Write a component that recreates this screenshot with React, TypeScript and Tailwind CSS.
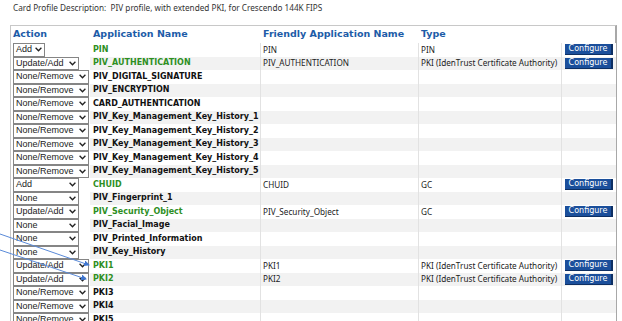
import React from 'react'

interface AppRow {
  action: string
  boxWidth: number
  name: string
  friendly: string
  type: string
  active: boolean
}

const rows: AppRow[] = [
  { action: 'Add', boxWidth: 32, name: 'PIN', friendly: 'PIN', type: 'PIN', active: true },
  { action: 'Update/Add', boxWidth: 66, name: 'PIV_AUTHENTICATION', friendly: 'PIV_AUTHENTICATION', type: 'PKI (IdenTrust Certificate Authority)', active: true },
  { action: 'None/Remove', boxWidth: 76, name: 'PIV_DIGITAL_SIGNATURE', friendly: '', type: '', active: false },
  { action: 'None/Remove', boxWidth: 76, name: 'PIV_ENCRYPTION', friendly: '', type: '', active: false },
  { action: 'None/Remove', boxWidth: 76, name: 'CARD_AUTHENTICATION', friendly: '', type: '', active: false },
  { action: 'None/Remove', boxWidth: 76, name: 'PIV_Key_Management_Key_History_1', friendly: '', type: '', active: false },
  { action: 'None/Remove', boxWidth: 76, name: 'PIV_Key_Management_Key_History_2', friendly: '', type: '', active: false },
  { action: 'None/Remove', boxWidth: 76, name: 'PIV_Key_Management_Key_History_3', friendly: '', type: '', active: false },
  { action: 'None/Remove', boxWidth: 76, name: 'PIV_Key_Management_Key_History_4', friendly: '', type: '', active: false },
  { action: 'None/Remove', boxWidth: 76, name: 'PIV_Key_Management_Key_History_5', friendly: '', type: '', active: false },
  { action: 'Add', boxWidth: 66, name: 'CHUID', friendly: 'CHUID', type: 'GC', active: true },
  { action: 'None', boxWidth: 66, name: 'PIV_Fingerprint_1', friendly: '', type: '', active: false },
  { action: 'Update/Add', boxWidth: 66, name: 'PIV_Security_Object', friendly: 'PIV_Security_Object', type: 'GC', active: true },
  { action: 'None', boxWidth: 66, name: 'PIV_Facial_Image', friendly: '', type: '', active: false },
  { action: 'None', boxWidth: 66, name: 'PIV_Printed_Information', friendly: '', type: '', active: false },
  { action: 'None', boxWidth: 66, name: 'PIV_Key_History', friendly: '', type: '', active: false },
  { action: 'Update/Add', boxWidth: 76, name: 'PKI1', friendly: 'PKI1', type: 'PKI (IdenTrust Certificate Authority)', active: true },
  { action: 'Update/Add', boxWidth: 76, name: 'PKI2', friendly: 'PKI2', type: 'PKI (IdenTrust Certificate Authority)', active: true },
  { action: 'None/Remove', boxWidth: 76, name: 'PKI3', friendly: '', type: '', active: false },
  { action: 'None/Remove', boxWidth: 76, name: 'PKI4', friendly: '', type: '', active: false },
  { action: 'None/Remove', boxWidth: 76, name: 'PKI5', friendly: '', type: '', active: false },
]

function SelectBox({ value, width }: { value: string; width: number }) {
  return (
    <div
      className="h-full flex items-center justify-between border border-[#858585] bg-white pl-[2px] pr-[2px] font-['Liberation_Sans',Arial,sans-serif] text-[9px] text-[#222]"
      style={{ width }}
    >
      <span className="leading-none">{value}</span>
      <svg width="7" height="5" viewBox="0 0 7 5">
        <path d="M0.6 0.8 L3.5 3.8 L6.4 0.8" fill="none" stroke="#222" strokeWidth="1.3" />
      </svg>
    </div>
  )
}

export default function App() {
  return (
    <div className="relative w-[622px] h-[321px] overflow-hidden bg-white font-['DejaVu_Sans',Verdana,sans-serif]">
      <div className="h-[25px] pl-[13px] pt-[3px] font-['Noto_Sans',sans-serif] text-[8.2px] text-[#333] whitespace-pre leading-[10px]">
        Card Profile Description:  PIV profile, with extended PKI, for Crescendo 144K FIPS
      </div>

      <div className="ml-[10px] w-[607px] border border-[#c8c8c8] border-r-[#a8a8a8] border-r-2">
        {/* header */}
        <div className="grid grid-cols-[79px_170px_158px_143px_55px] h-[17px] items-center text-[9.5px] font-bold text-[#1d5ca8]">
          <div className="pl-[2px]">Action</div>
          <div className="pl-[3px]">Application Name</div>
          <div className="pl-[3px]">Friendly Application Name</div>
          <div className="pl-[3px]">Type</div>
          <div />
        </div>

        {rows.map((row, i) => (
          <div
            key={row.name}
            className="grid grid-cols-[79px_170px_158px_143px_55px] h-[13.5px] text-[8px] leading-none"
          >
            <div className="pl-[2px] bg-white h-full">
              <SelectBox value={row.action} width={row.boxWidth} />
            </div>
            <div
              className={`flex items-center pl-[3px] font-bold whitespace-nowrap ${
                i % 2 === 1 ? 'bg-[#f2f2f2]' : 'bg-white'
              } ${row.active ? 'text-[#2e8f1f]' : 'text-[#111]'}`}
            >
              {row.name}
            </div>
            <div
              className={`flex items-center pl-[2px] border-l border-[#e2e2e2] font-['Noto_Sans',sans-serif] text-[8.2px] text-[#222] whitespace-nowrap ${
                i % 2 === 1 ? 'bg-[#f2f2f2]' : 'bg-white'
              }`}
            >
              {row.friendly}
            </div>
            <div
              className={`flex items-center pl-[2px] border-l border-[#e2e2e2] font-['Noto_Sans',sans-serif] text-[8.2px] text-[#222] whitespace-nowrap ${
                i % 2 === 1 ? 'bg-[#f2f2f2]' : 'bg-white'
              }`}
            >
              {row.type}
            </div>
            <div
              className={`flex items-center pl-[3px] border-l border-[#e2e2e2] ${
                i % 2 === 1 ? 'bg-[#f2f2f2]' : 'bg-white'
              }`}
            >
              {row.active && (
                <button className="w-[48px] h-[11px] flex items-center justify-center bg-[#1b4f9b] border-r-2 border-b border-[#0d2f63] text-white text-[8px] leading-none">
                  Configure
                </button>
              )}
            </div>
          </div>
        ))}
      </div>

      {/* annotation arrows */}
      <svg className="absolute left-0 top-0 pointer-events-none" width="622" height="321">
        <defs>
          <marker id="ah" markerWidth="6" markerHeight="6" refX="5" refY="3" orient="auto" markerUnits="userSpaceOnUse">
            <path d="M0 0 L6 3 L0 6 Z" fill="#3f76d0" />
          </marker>
        </defs>
        <line x1="0" y1="234" x2="89" y2="265" stroke="#5a8ad8" strokeWidth="1" markerEnd="url(#ah)" />
        <line x1="0" y1="250" x2="86" y2="279" stroke="#5a8ad8" strokeWidth="1" markerEnd="url(#ah)" />
      </svg>
    </div>
  )
}
